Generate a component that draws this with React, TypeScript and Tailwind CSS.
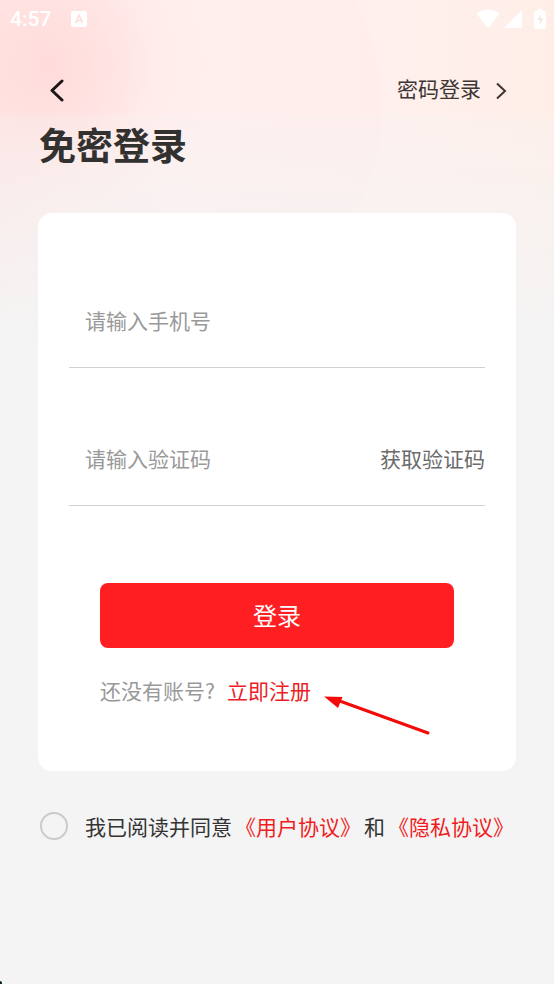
const StatusBar = () => {
    return (
        <div className="flex h-9 items-center justify-between pl-2.5 pr-2 pt-0.5 text-white">
            <div className="flex items-center gap-5">
                <span className="font-[Roboto,sans-serif] text-[21px] leading-6 font-medium">4:57</span>
                <svg viewBox="0 0 16 16" className="size-4" fill="none">
                    <rect width="16" height="16" rx="2" fill="currentColor" />
                    <path d="M4.5 12 8 4l3.500 8M6 9.500h4" stroke="#ffdcdb" strokeWidth="1.500" />
                </svg>
            </div>
            <div className="flex items-center gap-1">
                <svg viewBox="0 0 24 20" className="h-5 w-6" fill="currentColor">
                    <path d="M12 19.500 .5 4.500C7-.5 17-.5 23.500 4.500z" />
                </svg>
                <svg viewBox="0 0 18 18" className="size-[18px]" fill="currentColor">
                    <path d="M0 18 18 0v18z" />
                </svg>
                <svg viewBox="0 0 12 20" className="ml-2 h-5 w-3">
                    <path d="M3.500 0h5v2H11a1 1 0 0 1 1 1v16a1 1 0 0 1-1 1H1a1 1 0 0 1-1-1V3a1 1 0 0 1 1-1h2.500z" fill="currentColor" />
                    <path d="M7 5 3.500 11H6l-.5 5 3.500-6.500H6.500z" fill="#f3e4de" />
                </svg>
            </div>
        </div>
    )
}

const NavBar = () => {
    return (
        <nav className="flex h-[78px] items-center justify-between pt-[26px] pr-[47px] pl-12">
            <button type="button" aria-label="返回" className="flex h-10 w-5 items-center">
                <svg viewBox="0 0 18 28" className="h-7 w-[18px]" fill="none" stroke="#1c1716" strokeWidth="3" strokeLinecap="round" strokeLinejoin="round">
                    <path d="M14 7 4 16.500 14 26" />
                </svg>
            </button>
            <a href="#password" className="flex items-center gap-3.5 text-[#3d3533]">
                <span>密码登录</span>
                <svg viewBox="0 0 12 20" className="mt-1 h-5 w-3" fill="none" stroke="currentColor" strokeWidth="2">
                    <path d="m2 3.500 8 7.500-8 7.500" />
                </svg>
            </a>
        </nav>
    )
}

const Arrow = () => {
    return (
        <svg viewBox="0 0 108 42" className="pointer-events-none absolute top-[19px] left-[223px] h-[42px] w-[108px]">
            <path d="M14 7 105 40" stroke="#f50a0a" strokeWidth="3" strokeLinecap="round" />
            <path d="M1 3.500 19.500 4 15 15z" fill="#f50a0a" />
        </svg>
    )
}

const LoginCard = () => {
    return (
        <form className="mx-[38px] mt-[45px] rounded-[14px] bg-white px-[31px] pt-[62px] pb-16">
            <div className="flex h-[93px] items-center border-b border-[#d2d2d2] pb-0.5 pl-4">
                <input
                    type="tel"
                    aria-label="手机号"
                    placeholder="请输入手机号"
                    className="h-10 w-full min-w-0 bg-transparent outline-none placeholder:text-[#999]"
                />
            </div>
            <div className="mt-[45px] flex h-[93px] items-center border-b border-[#d2d2d2] pb-0.5 pl-4">
                <input
                    type="text"
                    aria-label="验证码"
                    placeholder="请输入验证码"
                    className="h-10 min-w-0 flex-1 bg-transparent outline-none placeholder:text-[#999]"
                />
                <button type="button" className="shrink-0 text-[#6b6b6b]">获取验证码</button>
            </div>

            <div className="mt-[77px] px-[31px]">
                <button type="submit" className="h-[65px] w-full rounded-lg bg-[#ff1f23] pb-0.5 text-2xl text-white">
                    登录
                </button>
                <p className="relative mt-[26px] mb-px flex gap-3 whitespace-nowrap text-[#999]">
                    <span>还没有账号?</span>
                    <a href="#register" className="text-[#ec1d26]">立即注册</a>
                    <Arrow />
                </p>
            </div>
        </form>
    )
}

const Agreement = () => {
    return (
        <div className="mt-[39px] flex items-center gap-[17px] pr-8 pl-10 text-[#333]">
            <input
                id="agree"
                type="checkbox"
                className="size-7 shrink-0 appearance-none rounded-full border-2 border-[#cbcbcb] checked:border-[#ff1f23] checked:bg-[#ff1f23]"
            />
            <label htmlFor="agree" className="flex gap-[3px] whitespace-nowrap">
                <span>我已阅读并同意</span>
                <a href="#terms" className="text-[#f01c22]">《用户协议》</a>
                <span>和</span>
                <a href="#privacy" className="text-[#f01c22]">《隐私协议》</a>
            </label>
        </div>
    )
}

export default function App() {
    return (
        <div className="relative min-h-screen overflow-hidden bg-[#f4f4f4] font-['Noto_Sans_CJK_SC',sans-serif] text-[21px] leading-8 bg-[linear-gradient(to_bottom,transparent_0,transparent_113px,rgb(244_244_244_/_0.2)_115px,rgb(244_244_244_/_0.55)_200px,#f4f4f4_340px),radial-gradient(288px_250px_at_96px_108px,transparent_99%,rgb(255_243_240_/_0.5)_100%),radial-gradient(circle_at_50px_65px,#ffdcdb_0,rgb(255_221_220_/_0.65)_50px,rgb(255_228_227_/_0.3)_100px,rgb(255_240_238_/_0)_160px),linear-gradient(to_right,#ffe4e3_0,#ffefee_30%,#ffedeb_68%,#ffe9df_100%)]">
            <StatusBar />
            <NavBar />
            <h1 className="mt-[7px] ml-[39px] text-[37px] leading-[47px] font-bold text-[#333130]">免密登录</h1>
            <LoginCard />
            <Agreement />
            <div className="absolute bottom-0 left-0 h-[3px] w-0.5 rounded-tr-full bg-[#06222f]" />
        </div>
    )
}
